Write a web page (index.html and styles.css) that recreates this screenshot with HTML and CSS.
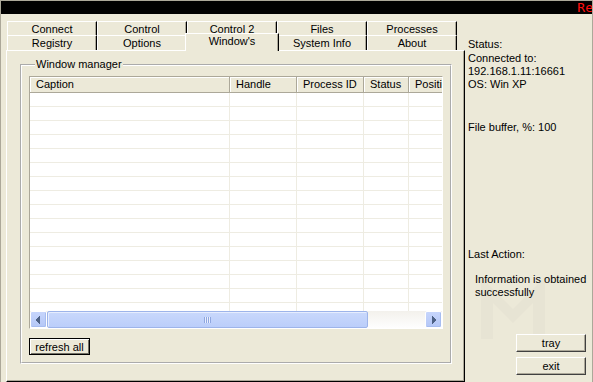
FILE: index.html
```html
<!DOCTYPE html>
<html>
<head>
<meta charset="utf-8">
<link rel="stylesheet" href="styles.css">
</head>
<body>
<div class="window">
  <div class="titlebar"><span class="ticker">Re</span></div>
  <div class="main">
    <div class="left">
      <div class="tabs">
        <div class="tabrow row1">
          <div class="tab">Connect</div>
          <div class="tab">Control</div>
          <div class="tab">Control 2</div>
          <div class="tab">Files</div>
          <div class="tab">Processes</div>
        </div>
        <div class="tabrow row2">
          <div class="tab">Registry</div>
          <div class="tab">Options</div>
          <div class="tab selected">Window's</div>
          <div class="tab">System Info</div>
          <div class="tab">About</div>
        </div>
      </div>
      <div class="panel">
        <fieldset class="group">
          <legend>Window manager</legend>
          <div class="list">
            <div class="viewport">
              <div class="sheet">
                <div class="header">
                  <div class="hcell c1">Caption</div>
                  <div class="hcell c2">Handle</div>
                  <div class="hcell c3">Process ID</div>
                  <div class="hcell c4">Status</div>
                  <div class="hcell c5">Position</div>
                </div>
                <div class="rows">
                  <div class="col c1"></div>
                  <div class="col c2"></div>
                  <div class="col c3"></div>
                  <div class="col c4"></div>
                  <div class="col c5"></div>
                </div>
              </div>
            </div>
            <div class="hscroll">
              <div class="sbtn"><svg width="7" height="8" viewBox="0 0 7 8"><path d="M4 0h1v8h-1zM3 1h1v6h-1zM2 2h1v4h-1zM1 3h1v2h-1z" fill="#4d6185"/></svg></div>
              <div class="thumb"><span class="grip"></span></div>
              <div class="track"></div>
              <div class="sbtn"><svg width="7" height="8" viewBox="0 0 7 8"><path d="M2 0h1v8h-1zM3 1h1v6h-1zM4 2h1v4h-1zM5 3h1v2h-1z" fill="#4d6185"/></svg></div>
            </div>
          </div>
          <button class="btn default">refresh all</button>
        </fieldset>
      </div>
    </div>
    <div class="right">
      <svg class="watermark" width="120" height="100" viewBox="0 0 120 100">
        <path d="M8 70 L8 8 L40 40 L72 8 L72 70 L60 70 L60 34 L40 54 L20 34 L20 70 Z" fill="#e7e4d4"/>
      </svg>
      <div class="line status">Status:</div>
      <div class="conn">
        <div class="line">Connected to:</div>
        <div class="line">192.168.1.11:16661</div>
        <div class="line">OS: Win XP</div>
      </div>
      <div class="line buffer">File buffer, %: 100</div>
      <div class="line last">Last Action:</div>
      <div class="info">
        <div class="line">Information is obtained</div>
        <div class="line">successfully</div>
      </div>
      <div class="actions">
        <button class="btn side">tray</button>
        <button class="btn side">exit</button>
      </div>
    </div>
  </div>
</div>
</body>
</html>
```
FILE: styles.css
```css
* { box-sizing: border-box; }
body {
  margin: 0;
  font: 11px "Liberation Sans", Arial, sans-serif;
  color: #000;
  background: #ece9d8;
}
.window {
  width: 593px;
  height: 382px;
  border: 1px solid #aca899;
  border-bottom: 0;
  background: #ece9d8;
  display: flex;
  flex-direction: column;
  overflow: hidden;
}
.titlebar {
  height: 13px;
  flex: none;
  background: #000;
  display: flex;
  justify-content: flex-end;
  align-items: center;
  overflow: hidden;
}
.ticker {
  color: #ff1010;
  font: 13px "DejaVu Sans Mono", monospace;
  line-height: 13px;
  margin-right: -1px;
}
.main {
  flex: 1;
  display: flex;
  min-height: 0;
}
.left {
  width: 464px;
  flex: none;
  padding: 7px 0 0 5px;
  display: flex;
  flex-direction: column;
}
.tabs { margin-left: 1px; }
.tabrow { display: flex; align-items: flex-start; }
.tab {
  width: 90px;
  flex: none;
  text-align: center;
  line-height: 13px;
  border-top: 1px solid #fff;
  border-left: 1px solid #fff;
  border-right: 1px solid #000;
  box-shadow: inset -1px 0 0 #aca899;
  background: #ece9d8;
  white-space: nowrap;
}
.row1 .tab { height: 14px; padding-top: 1px; }
.row2 .tab { height: 15px; padding-top: 1px; }
.row2 .tab.selected {
  position: relative;
  z-index: 1;
  width: 94px;
  height: 18px;
  margin: -2px -2px -1px -2px;
  padding-top: 1px;
  line-height: 12px;
}
.panel {
  flex: 1;
  border: 1px solid;
  border-color: #fff #000 #000 #fff;
  box-shadow: inset -1px -1px 0 #aca899;
}
.group {
  margin: 7px 12px 0 13px;
  border: 2px groove #fff;
  padding: 0 7px 7px 7px;
  min-width: 0;
}
.group legend {
  margin-left: 6px;
  padding: 0 1px;
  line-height: 13px;
}
.list {
  margin-top: 5px;
  border: 1px solid;
  border-color: #aca899 #fff #fff #aca899;
  background: #fff;
}
.viewport {
  height: 234px;
  overflow: hidden;
}
.sheet { width: 472px; height: 100%; display: flex; flex-direction: column; }
.header {
  display: flex;
  height: 16px;
  flex: none;
  background: #ece9d8;
  border-bottom: 1px solid #aca899;
}
.hcell {
  flex: none;
  line-height: 15px;
  padding-left: 6px;
  border-right: 1px solid #aca899;
  box-shadow: inset 1px 1px 0 #fff;
  white-space: nowrap;
  overflow: hidden;
}
.c1 { width: 200px; }
.c2 { width: 67px; }
.c3 { width: 67px; }
.c4 { width: 45px; }
.c5 { width: 93px; }
.rows {
  flex: 1;
  display: flex;
  background: repeating-linear-gradient(to bottom, transparent 0 13px, #eeece2 13px 14px);
}
.col { flex: none; border-right: 1px solid #eeece2; }
.hscroll {
  display: flex;
  height: 17px;
  background: linear-gradient(to bottom, #f3f1ec, #fefefe);
}
.sbtn {
  width: 17px;
  flex: none;
  display: flex;
  align-items: center;
  justify-content: center;
  border: 1px solid #fff;
  border-radius: 2px;
  background: linear-gradient(to bottom, #c6d5fc, #b4c7f6);
  box-shadow: inset -1px -1px 0 #a7bdf0;
}
.thumb {
  width: 321px;
  flex: none;
  display: flex;
  align-items: center;
  justify-content: center;
  border: 1px solid #9db4ea;
  border-radius: 2px;
  background: linear-gradient(to bottom, #c9d8fc, #bbcefa);
  box-shadow: inset 1px 1px 0 #e6edfe;
}
.grip {
  width: 7px;
  height: 6px;
  background: repeating-linear-gradient(to right, #8fa7e0 0 1px, #e8eefe 1px 2px);
}
.track { flex: 1; }
.btn {
  display: block;
  font: 11px "Liberation Sans", Arial, sans-serif;
  color: #000;
  background: #ece9d8;
  padding: 0;
  cursor: default;
}
.btn.default {
  margin-top: 9px;
  width: 61px;
  height: 17px;
  border: 1px solid #000;
  box-shadow: inset 1px 1px 0 #fff, inset -1px -1px 0 #716f64;
  line-height: 14px;
}
.right {
  flex: 1;
  position: relative;
  padding: 24px 0 0 3px;
  white-space: nowrap;
}
.line { line-height: 13px; position: relative; }
.conn { margin-top: 1px; }
.buffer { margin-top: 30px; }
.last { margin-top: 114px; }
.info { margin-top: 12px; padding-left: 7px; }
.actions {
  margin-top: 35px;
  padding-left: 48px;
  display: flex;
  flex-direction: column;
  gap: 5px;
}
.btn.side {
  width: 70px;
  height: 18px;
  border: 1px solid;
  border-color: #fff #404040 #404040 #fff;
  box-shadow: inset -1px -1px 0 #aca899;
  line-height: 15px;
  position: relative;
}
.watermark {
  position: absolute;
  left: 8px;
  top: 255px;
}
```
